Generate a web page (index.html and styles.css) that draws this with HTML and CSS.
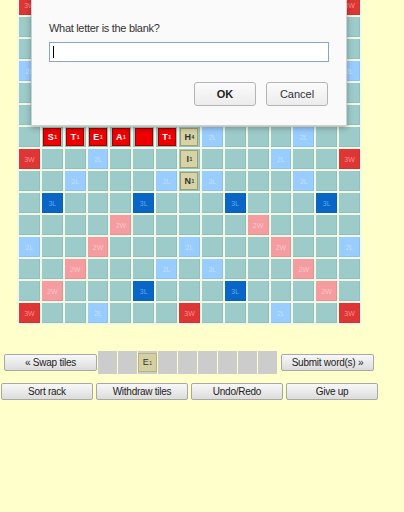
FILE: index.html
```html
<!DOCTYPE html>
<html>
<head>
<meta charset="utf-8">
<title>Scrabble</title>
<link rel="stylesheet" href="styles.css">
</head>
<body>
<div class="page">
  <div class="board">
    <i class="tw">3W</i><i></i><i></i><i class="dl"></i><i></i><i></i><i></i><i class="tw"></i><i></i><i></i><i></i><i class="dl"></i><i></i><i></i><i class="tw">3W</i>
    <i></i><i class="dw"></i><i></i><i></i><i></i><i class="tl"></i><i></i><i></i><i></i><i class="tl"></i><i></i><i></i><i></i><i class="dw"></i><i></i>
    <i></i><i></i><i class="dw"></i><i></i><i></i><i></i><i class="dl"></i><i></i><i class="dl"></i><i></i><i></i><i></i><i class="dw"></i><i></i><i></i>
    <i class="dl">2L</i><i></i><i></i><i class="dw"></i><i></i><i></i><i></i><i class="dl"></i><i></i><i></i><i></i><i class="dw"></i><i></i><i></i><i class="dl">2L</i>
    <i></i><i></i><i></i><i></i><i class="dw"></i><i></i><i></i><i></i><i></i><i></i><i class="dw"></i><i></i><i></i><i></i><i></i>
    <i></i><i class="tl"></i><i></i><i></i><i></i><i class="tl"></i><i></i><i></i><i></i><i class="tl"></i><i></i><i></i><i></i><i class="tl"></i><i></i>
    <i></i><i><b class="t red">S<sub>1</sub></b></i><i><b class="t red">T<sub>1</sub></b></i><i><b class="t red">E<sub>1</sub></b></i><i><b class="t red">A<sub>1</sub></b></i><i><b class="t red"></b></i><i><b class="t red">T<sub>1</sub></b></i><i><b class="t placed">H<sub>4</sub></b></i><i class="dl">2L</i><i></i><i></i><i></i><i class="dl">2L</i><i></i><i></i>
    <i class="tw">3W</i><i></i><i></i><i class="dl">2L</i><i></i><i></i><i></i><i><b class="t placed">I<sub>1</sub></b></i><i></i><i></i><i></i><i class="dl">2L</i><i></i><i></i><i class="tw">3W</i>
    <i></i><i></i><i class="dl">2L</i><i></i><i></i><i></i><i class="dl">2L</i><i><b class="t placed">N<sub>1</sub></b></i><i class="dl">2L</i><i></i><i></i><i></i><i class="dl">2L</i><i></i><i></i>
    <i></i><i class="tl">3L</i><i></i><i></i><i></i><i class="tl">3L</i><i></i><i></i><i></i><i class="tl">3L</i><i></i><i></i><i></i><i class="tl">3L</i><i></i>
    <i></i><i></i><i></i><i></i><i class="dw">2W</i><i></i><i></i><i></i><i></i><i></i><i class="dw">2W</i><i></i><i></i><i></i><i></i>
    <i class="dl">2L</i><i></i><i></i><i class="dw">2W</i><i></i><i></i><i></i><i class="dl">2L</i><i></i><i></i><i></i><i class="dw">2W</i><i></i><i></i><i class="dl">2L</i>
    <i></i><i></i><i class="dw">2W</i><i></i><i></i><i></i><i class="dl">2L</i><i></i><i class="dl">2L</i><i></i><i></i><i></i><i class="dw">2W</i><i></i><i></i>
    <i></i><i class="dw">2W</i><i></i><i></i><i></i><i class="tl">3L</i><i></i><i></i><i></i><i class="tl">3L</i><i></i><i></i><i></i><i class="dw">2W</i><i></i>
    <i class="tw">3W</i><i></i><i></i><i class="dl">2L</i><i></i><i></i><i></i><i class="tw">3W</i><i></i><i></i><i></i><i class="dl">2L</i><i></i><i></i><i class="tw">3W</i>
  </div>

  <div class="rack-row">
    <button class="btn swap">« Swap tiles</button>
    <div class="slots">
      <span class="slot"></span>
      <span class="slot"></span>
      <span class="slot"><b class="t rt">E<sub>1</sub></b></span>
      <span class="slot"></span>
      <span class="slot"></span>
      <span class="slot"></span>
      <span class="slot"></span>
      <span class="slot"></span>
      <span class="slot"></span>
    </div>
    <button class="btn submit">Submit word(s) »</button>
  </div>

  <div class="actions">
    <button class="btn act">Sort rack</button>
    <button class="btn act">Withdraw tiles</button>
    <button class="btn act">Undo/Redo</button>
    <button class="btn act">Give up</button>
  </div>

  <div class="dialog">
    <div class="prompt">What letter is the blank?</div>
    <div class="field"><span class="caret"></span></div>
    <div class="dlg-buttons">
      <button class="dbtn ok">OK</button>
      <button class="dbtn">Cancel</button>
    </div>
  </div>
</div>
</body>
</html>
```

FILE: styles.css
```css
html, body {
  margin: 0;
  padding: 0;
  background: #ffffcc;
  overflow: hidden;
}

body {
  font-family: "Liberation Sans", Arial, sans-serif;
}

.page {
  position: relative;
  display: flow-root;
  width: 380px;
  height: 512px;
}

/* ---------- board ---------- */
.board {
  display: grid;
  grid-template-columns: repeat(15, 1fr);
  grid-auto-rows: 20px;
  gap: 2px;
  padding: 2px;
  width: 345px;
  box-sizing: border-box;
  margin: -7px 0 0 17px;
  background: #f1f8e6;
}

.board > i {
  display: flex;
  align-items: center;
  justify-content: center;
  font-style: normal;
  font-size: 7px;
  line-height: 1;
  color: rgba(255, 255, 255, 0.45);
  background: #9ccbca;
  box-shadow: inset -1px -1px 0 rgba(0, 0, 0, 0.06);
}

.board > i.dl { background: #99ccff; }
.board > i.tl { background: #0a66c6; color: rgba(120, 190, 255, 0.8); }
.board > i.dw { background: #f49ca0; }
.board > i.tw { background: #de3535; color: rgba(255, 160, 160, 0.85); }

/* ---------- tiles ---------- */
.t {
  display: flex;
  align-items: center;
  justify-content: center;
  width: 18px;
  height: 18px;
  box-sizing: border-box;
  font-size: 9px;
  font-weight: bold;
  line-height: 1;
}

.t sub {
  font-size: 5px;
  line-height: 0;
  vertical-align: -2px;
  margin-left: 0.5px;
}

.red {
  background: #ee0000;
  border: 1px solid #a40000;
  color: #fff;
}

.placed {
  background: #d6d3a6;
  border: 1px solid #a29e74;
  color: #333;
}

/* ---------- rack row ---------- */
.rack-row {
  display: flex;
  align-items: center;
  margin-top: 26px;
  padding-left: 4px;
}

.btn {
  height: 17px;
  box-sizing: border-box;
  padding: 0;
  border: 1px solid #a8a8a8;
  border-radius: 2px;
  background: linear-gradient(#f8f8f8, #dcdcdc);
  font-family: "Liberation Sans", Arial, sans-serif;
  font-size: 10px;
  letter-spacing: -0.25px;
  color: #222;
  line-height: 15px;
}

.swap, .submit {
  width: 93px;
}

.slots {
  display: flex;
  gap: 1px;
  margin: 0 4px 0 1px;
}

.slot {
  display: flex;
  align-items: center;
  justify-content: center;
  width: 19px;
  height: 23px;
  background: #cccccc;
}

.rt {
  width: 19px;
  height: 19px;
  background: #d3d0a2;
  border: 1px solid #b5b28a;
  color: #333;
  font-weight: normal;
}

/* ---------- action buttons ---------- */
.actions {
  display: flex;
  gap: 3px;
  margin-top: 9px;
  padding-left: 1px;
}

.act {
  width: 92px;
}

/* ---------- prompt dialog (overlay) ---------- */
.dialog {
  position: absolute;
  left: 31px;
  top: -20px;
  width: 316px;
  box-sizing: border-box;
  padding: 40px 17px 19px 17px;
  background: #fafafa;
  border: 1px solid #cfcfcf;
  box-shadow: 0 2px 6px rgba(0, 0, 0, 0.3);
}

.prompt {
  font-size: 11px;
  line-height: 14px;
  letter-spacing: -0.3px;
  color: #333;
}

.field {
  display: flex;
  align-items: center;
  height: 20px;
  margin-top: 7px;
  box-sizing: border-box;
  border: 1px solid #8aa6c2;
  background: #fff;
}

.caret {
  width: 1px;
  height: 12px;
  margin-left: 3px;
  background: #000;
}

.dlg-buttons {
  display: flex;
  justify-content: flex-end;
  gap: 10px;
  margin-top: 20px;
  padding-right: 1px;
}

.dbtn {
  width: 62px;
  height: 24px;
  padding: 0;
  box-sizing: border-box;
  border: 1px solid #b4b4b4;
  border-radius: 3px;
  background: linear-gradient(#fbfbfb, #ececec);
  font-family: "Liberation Sans", Arial, sans-serif;
  font-size: 11px;
  color: #333;
}

.dbtn.ok {
  font-weight: bold;
  color: #222;
}
```
